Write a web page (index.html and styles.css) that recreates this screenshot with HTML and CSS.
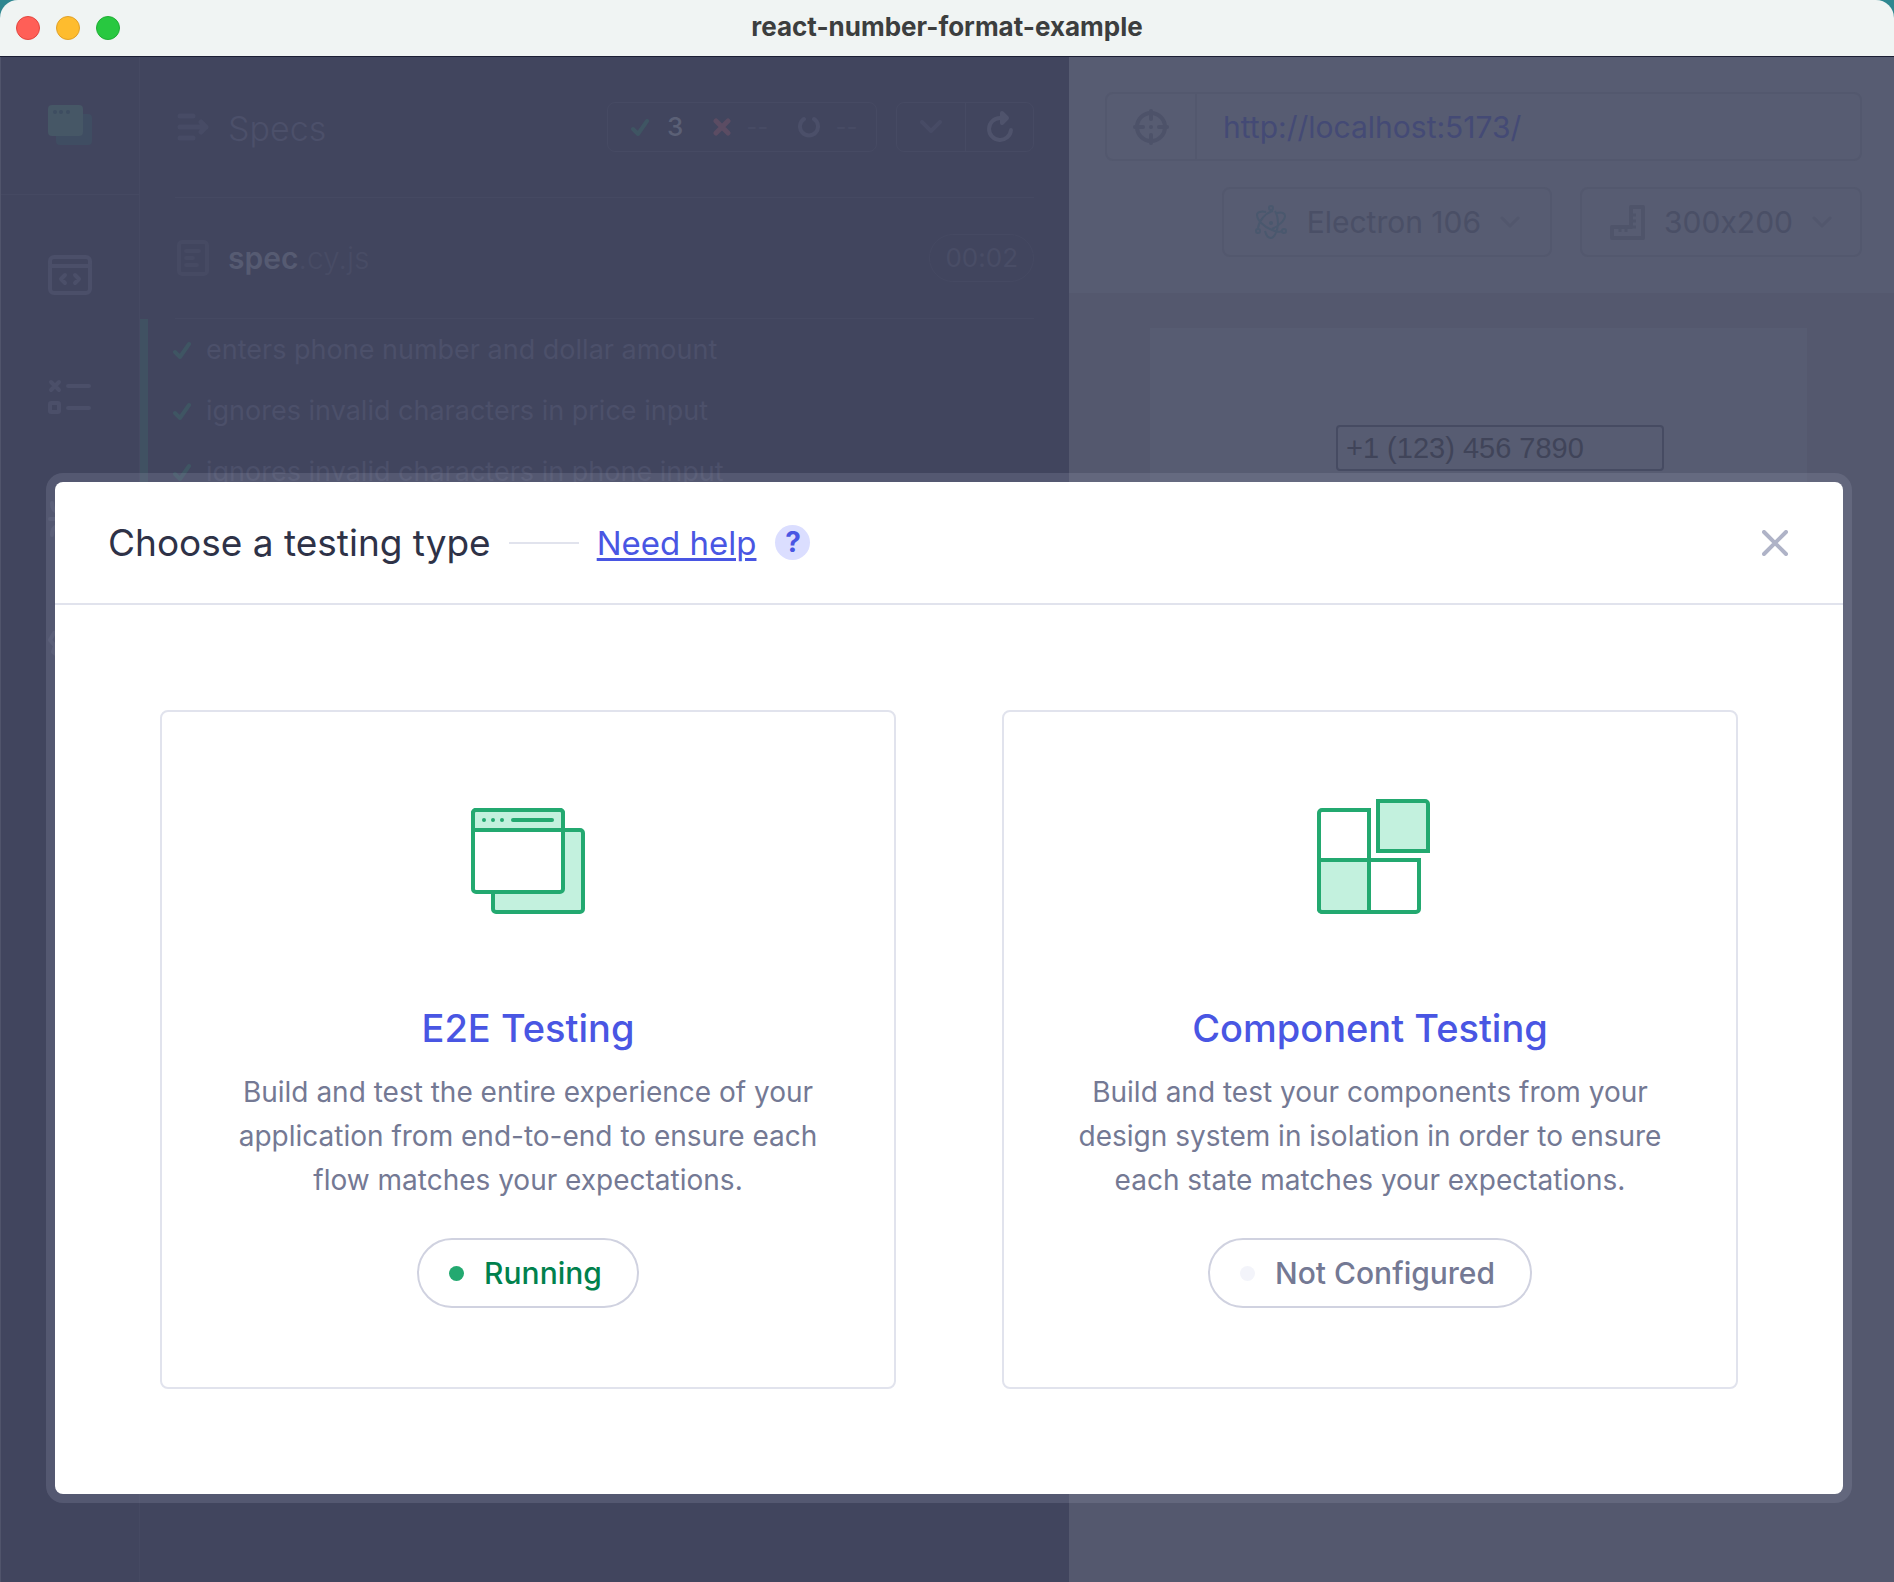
FILE: index.html
```html
<!DOCTYPE html>
<html lang="en">
<head>
<meta charset="utf-8">
<meta name="viewport" content="width=device-width, initial-scale=1">
<title>react-number-format-example</title>
<link rel="stylesheet" href="styles.css">
</head>
<body>
<div class="window">
  <header class="titlebar">
    <div class="lights">
      <button class="light light-close" type="button" aria-label="Close window"></button>
      <button class="light light-min" type="button" aria-label="Minimize window"></button>
      <button class="light light-max" type="button" aria-label="Zoom window"></button>
    </div>
    <h1 class="window-title">react-number-format-example</h1>
  </header>

  <div class="app">
    <nav class="sidebar" aria-label="Main">
      <div class="sidebar-logo">
        <svg width="44" height="40" viewBox="0 0 44 40">
          <rect x="8" y="9" width="36" height="31" rx="4" fill="#3f4d62"/>
          <rect width="35" height="31" rx="4" fill="#465766"/>
          <g fill="#3e4d61"><circle cx="7" cy="7" r="2"/><circle cx="13" cy="7" r="2"/><circle cx="20" cy="7" r="2"/></g>
        </svg>
      </div>
      <a class="nav-link" href="#specs" aria-label="Specs">
        <svg width="44" height="40" viewBox="0 0 44 40" fill="none" stroke="#4b4f69" stroke-width="4" stroke-linejoin="round" stroke-linecap="round"><rect x="2" y="2" width="40" height="36" rx="4"/><path d="M2 11h40M17 20l-4 4 4 4M27 20l4 4-4 4"/></svg>
      </a>
      <a class="nav-link" href="#runs" aria-label="Runs">
        <svg width="44" height="40" viewBox="0 0 44 40" fill="none" stroke="#4b4f69" stroke-width="4" stroke-linecap="round"><path d="M3 5l8 8M11 5l-8 8M20 9h21M20 31h21"/><rect x="2" y="26" width="9" height="9" rx="1"/></svg>
      </a>
      <a class="nav-link" href="#debug" aria-label="Debug">
        <svg width="44" height="40" viewBox="0 0 44 40" fill="none" stroke="#4b4f69" stroke-width="4" stroke-linecap="round"><path d="M4 4c0 7 4 9 8 9M2 20h8M4 36c0-7 4-9 8-9"/><rect x="12" y="10" width="20" height="26" rx="10"/></svg>
      </a>
      <a class="nav-link" href="#settings" aria-label="Settings">
        <svg width="44" height="40" viewBox="0 0 44 40" fill="none" stroke="#4b4f69" stroke-width="4" stroke-linejoin="round"><path d="M15 4h14l2 6 7 2 3 7-4 5 2 7-9 6H14l-9-6 2-6-5-6 4-7 7-2z"/><circle cx="22" cy="21" r="7"/></svg>
      </a>
    </nav>

    <section class="reporter" aria-label="Test results">
      <div class="reporter-head">
        <svg class="lead-icon" width="32" height="28" viewBox="0 0 32 28" fill="none" stroke="#474b65" stroke-width="5" stroke-linecap="round" stroke-linejoin="round"><path d="M3 3h13M3 14h26M3 25h13M24 9l5 5-5 5"/></svg>
        <h2 class="reporter-title">Specs</h2>
        <ul class="stats">
          <li class="stat stat-pass"><svg width="18" height="18" viewBox="0 0 18 18" fill="none" stroke="#3f5563" stroke-width="4" stroke-linecap="round" stroke-linejoin="round"><path d="M2 11l5 5 9-13"/></svg><span>3</span></li>
          <li class="stat"><svg width="18" height="18" viewBox="0 0 18 18" stroke="#5b4c63" stroke-width="5" stroke-linecap="round"><path d="M3 3l12 12M15 3L3 15"/></svg><span>--</span></li>
          <li class="stat"><svg width="22" height="22" viewBox="0 0 22 22" fill="none" stroke="#4b4f69" stroke-width="4" stroke-linecap="round"><path d="M6 3a9 9 0 1 0 10 0"/></svg><span>--</span></li>
        </ul>
        <div class="run-controls">
          <button class="run-button" type="button" aria-label="Next"><svg width="22" height="14" viewBox="0 0 22 14" fill="none" stroke="#474b65" stroke-width="4" stroke-linecap="round" stroke-linejoin="round"><path d="M2 2l9 9 9-9"/></svg></button>
          <button class="run-button" type="button" aria-label="Rerun"><svg width="28" height="32" viewBox="0 0 28 32" fill="none" stroke="#4f536c" stroke-width="4" stroke-linecap="round" stroke-linejoin="round"><path d="M25 19a11 11 0 1 1-11-12h5"/><path d="M16 2l5 5-5 5z" fill="#4f536c"/></svg></button>
        </div>
      </div>
      <div class="spec-row">
        <svg class="lead-icon" width="32" height="36" viewBox="0 0 32 36" fill="none" stroke="#464a63" stroke-width="4" stroke-linecap="round"><rect x="2" y="2" width="28" height="32" rx="3"/><path d="M9 11h13M9 18h7M9 25h11"/></svg>
        <p class="spec-name"><b>spec</b>.cy.js</p>
        <span class="duration">00:02</span>
      </div>
      <ul class="tests">
        <li class="test"><svg width="18" height="18" viewBox="0 0 18 18"><path d="M2 11l5 5 9-13"/></svg>enters phone number and dollar amount</li>
        <li class="test"><svg width="18" height="18" viewBox="0 0 18 18"><path d="M2 11l5 5 9-13"/></svg>ignores invalid characters in price input</li>
        <li class="test"><svg width="18" height="18" viewBox="0 0 18 18"><path d="M2 11l5 5 9-13"/></svg>ignores invalid characters in phone input</li>
      </ul>
    </section>

    <section class="preview" aria-label="Application preview">
      <div class="toolbar">
        <div class="urlbar">
          <button class="picker" type="button" aria-label="Open selector playground"><svg width="36" height="36" viewBox="0 0 36 36" fill="none" stroke="#4d5269" stroke-width="4" stroke-linecap="round"><circle cx="18" cy="18" r="14"/><path d="M18 2v8M18 26v8M2 18h8M26 18h8M18 18h0"/></svg></button>
          <input class="url" type="text" aria-label="URL" value="http://localhost:5173/">
        </div>
        <div class="options">
          <button class="option" type="button">
            <svg width="34" height="34" viewBox="0 0 34 34" fill="none" stroke="#4a586e" stroke-width="2"><path d="M12 7C7 6 3 7 3 10c0 5 7 12 15 15 5 2 9 2 10 1M23 8c5-1 8 0 8 3 0 4-6 10-13 13M11 26c1 4 3 7 6 7s6-6 7-13c0-6-1-11-3-14M19 6C11 8 5 16 4 23"/><circle cx="17" cy="3" r="2"/><circle cx="4" cy="26" r="2"/><circle cx="30" cy="26" r="2"/><circle cx="17" cy="18" r="1"/></svg>
            Electron 106
            <svg width="20" height="12" viewBox="0 0 20 12" fill="none" stroke="#52576d" stroke-width="3" stroke-linecap="round" stroke-linejoin="round"><path d="M2 2l8 8 8-8"/></svg>
          </button>
          <button class="option option-size" type="button">
            <svg width="35" height="35" viewBox="0 0 35 35" fill="none" stroke="#4f546a" stroke-width="4" stroke-linejoin="round"><path d="M2 22h19V2h12v31H2z"/><path d="M10 22v5M16 22v5M21 22h5M21 16h5M21 10h5" stroke-width="3"/></svg>
            300x200
            <svg width="20" height="12" viewBox="0 0 20 12" fill="none" stroke="#52576d" stroke-width="3" stroke-linecap="round" stroke-linejoin="round"><path d="M2 2l8 8 8-8"/></svg>
          </button>
        </div>
      </div>
      <div class="stage">
        <div class="viewport">
          <input class="phone" type="text" aria-label="Phone number" value="+1 (123) 456 7890">
        </div>
      </div>
    </section>

    <div class="overlay">
      <div class="modal" role="dialog" aria-modal="true" aria-labelledby="modal-title">
        <div class="modal-head">
          <h2 class="modal-title" id="modal-title">Choose a testing type</h2>
          <span class="dash"></span>
          <a class="help" href="#help">Need help</a>
          <span class="help-badge" aria-hidden="true">?</span>
          <button class="close" type="button" aria-label="Close"><svg width="26" height="26" viewBox="0 0 26 26" stroke="#afb3c7" stroke-width="4" stroke-linecap="round"><path d="M2 2l22 22M24 2L2 24"/></svg></button>
        </div>
        <div class="cards">
          <article class="card">
            <svg width="116" height="116" viewBox="0 0 116 116" fill="#c3f1de" stroke="#23a970" stroke-width="4" stroke-linejoin="round">
              <rect x="23" y="32" width="90" height="82" rx="3"/>
              <rect x="3" y="12" width="90" height="82" rx="3" fill="#fff"/>
              <path d="M3 32V15a3 3 0 0 1 3-3h84a3 3 0 0 1 3 3v17z"/>
              <g fill="#23a970" stroke="none"><circle cx="14" cy="22" r="2"/><circle cx="23" cy="22" r="2"/><circle cx="32" cy="22" r="2"/></g>
              <path d="M43 22h39" stroke-linecap="round"/>
            </svg>
            <h3 class="card-title">E2E Testing</h3>
            <p class="card-text">Build and test the entire experience of your application from end-to-end to ensure each flow matches your expectations.</p>
            <button class="status status-running" type="button"><span class="dot"></span>Running</button>
          </article>
          <article class="card">
            <svg width="124" height="116" viewBox="-8 0 124 116" fill="#fff" stroke="#23a970" stroke-width="4">
              <path d="M53 12v50h50v49a3 3 0 0 1-3 3H6a3 3 0 0 1-3-3V15a3 3 0 0 1 3-3h49"/>
              <path d="M3 62h50v52H6a3 3 0 0 1-3-3z" fill="#c3f1de"/>
              <path d="M62 3h47a3 3 0 0 1 3 3v47H62z" fill="#c3f1de"/>
            </svg>
            <h3 class="card-title">Component Testing</h3>
            <p class="card-text">Build and test your components from your design system in isolation in order to ensure each state matches your expectations.</p>
            <button class="status" type="button"><span class="dot"></span>Not Configured</button>
          </article>
        </div>
      </div>
    </div>
  </div>
</div>
</body>
</html>
```
FILE: styles.css
```css
*, *::before, *::after { box-sizing: border-box; }

body {
  margin: 0;
  background: #2f8790;
  font-family: Inter, "Liberation Sans", sans-serif;
  font-variant-ligatures: no-contextual;
}

h1, h2, h3, p, ul { margin: 0; padding: 0; font-weight: 400; }
ul { list-style: none; }
button, input { font: inherit; color: inherit; background: none; border: 0; padding: 0; margin: 0; }
svg { display: block; flex: none; }

.window {
  display: flex;
  flex-direction: column;
  min-height: 100vh;
  border-radius: 18px 18px 0 0;
  overflow: hidden;
}

.titlebar {
  display: grid;
  grid-template-columns: 1fr auto 1fr;
  align-items: center;
  height: 57px;
  padding: 0 16px;
  background: #f0f4f3;
  border-bottom: 1px solid #1b1e34;
}
.lights { display: flex; gap: 16px; }
.light { width: 24px; height: 24px; border-radius: 50%; }
.light-close { background: #ff5f57; border: 1px solid #e2463f; }
.light-min { background: #febc2e; border: 1px solid #e0a028; }
.light-max { background: #28c840; border: 1px solid #1fae34; }
.window-title { padding-bottom: 2px; font-size: 26px; font-weight: 700; line-height: 32px; color: #3c3e3e; }

.app {
  position: relative;
  flex: 1;
  display: grid;
  grid-template-columns: 140px 929px minmax(0, 1fr);
  background: #41455e;
}

.sidebar { border-right: 1px solid #454962; border-left: 1px solid #50546b; }
.sidebar-logo {
  height: 138px;
  padding: 48px 0 0 47px;
  border-bottom: 1px solid #454962;
  margin-bottom: 19px;
}
.nav-link { display: flex; align-items: center; height: 122px; padding-left: 47px; }

.reporter-head, .spec-row { display: flex; align-items: center; margin: 0 35px; border-bottom: 1px solid #454962; }
.reporter-head { height: 141px; padding-bottom: 1px; }
.spec-row { height: 121px; }
.lead-icon { margin: 0 19px 0 2px; }
.reporter-title { flex: 1; padding-top: 3px; font-size: 34px; font-weight: 300; color: #4c506a; }
.stats {
  display: flex;
  align-items: center;
  gap: 30px;
  width: 270px;
  height: 50px;
  padding-left: 23px;
  margin: 0 19px 0 0;
  border: 1px solid #464a63;
  border-radius: 8px;
  font-size: 24px;
  color: #474b64;
}
.stat { display: flex; align-items: center; gap: 15px; }
.stat-pass { gap: 18px; font-size: 26px; font-weight: 500; color: #5b6076; }
.run-controls { display: flex; border: 1px solid #464a63; border-radius: 8px; }
.run-button { display: flex; align-items: center; justify-content: center; width: 68px; height: 48px; }
.run-button + .run-button { border-left: 1px solid #464a63; }
.spec-name { flex: 1; font-size: 30px; font-weight: 300; color: #484c65; }
.spec-name b { font-weight: 600; color: #565b72; }
.duration {
  padding: 0 15px;
  border: 1px solid #454962;
  border-radius: 24px;
  font-size: 26px;
  line-height: 46px;
  color: #494d66;
}

.tests { border-left: 8px solid #405162; }
.test {
  display: flex;
  align-items: center;
  gap: 15px;
  height: 61px;
  padding-left: 25px;
  font-size: 27px;
  color: #4c506a;
}
.test svg { fill: none; stroke: #3f5563; stroke-width: 4; stroke-linecap: round; stroke-linejoin: round; }

.preview { display: flex; flex-direction: column; background: #54586e; }
.toolbar { padding: 35px 32px 36px 36px; background: #575c72; font-size: 30px; }
.urlbar, .option { border: 2px solid #53586e; border-radius: 8px; }
.urlbar { display: flex; height: 69px; }
.picker { display: flex; align-items: center; justify-content: center; width: 90px; border-right: 2px solid #53586e; }
.url { flex: 1; min-width: 0; padding-left: 26px; color: #444a75; }
.options { display: flex; justify-content: flex-end; gap: 28px; margin-top: 26px; }
.option { display: flex; align-items: center; gap: 19px; height: 70px; padding: 0 30px; color: #4a4f66; }
.option-size { padding: 0 28px; }
.stage { flex: 1; display: flex; align-items: flex-start; padding: 35px 87px 0 81px; }
.viewport { flex: 1; aspect-ratio: 3 / 2; padding-top: 97px; background: #575c72; }
.phone {
  display: block;
  width: 328px;
  height: 46px;
  margin-left: 186px;
  padding: 0 8px;
  border: 2px solid #464b62;
  border-radius: 4px;
  font-family: "Liberation Sans", Arial, sans-serif;
  font-size: 29px;
  color: #404459;
}

.overlay {
  position: absolute;
  inset: 0;
  display: flex;
  align-items: flex-end;
  padding: 0 51px 88px 55px;
}
.modal {
  flex: 1;
  background: #fff;
  border-radius: 8px;
  box-shadow: 0 0 0 9px rgba(144, 149, 173, 0.25);
}
.modal-head {
  display: flex;
  align-items: center;
  height: 123px;
  padding: 0 55px 0 53px;
  border-bottom: 2px solid #e1e3ed;
}
.modal-title { font-size: 37px; line-height: 44px; color: #2e3247; }
.dash { width: 70px; height: 2px; margin: 0 18px; background: #e1e3ed; }
.help {
  font-size: 33px;
  line-height: 44px;
  color: #4956e3;
  text-decoration-thickness: 3px;
  text-underline-offset: 3px;
}
.help-badge {
  width: 35px;
  height: 35px;
  margin-left: 19px;
  border-radius: 50%;
  background: #dbdeff;
  font-size: 28px;
  font-weight: 700;
  line-height: 35px;
  text-align: center;
  color: #4956e3;
}
.close { margin-left: auto; }

.cards { display: grid; grid-template-columns: 1fr 1fr; gap: 106px; padding: 105px; }
.card {
  display: flex;
  flex-direction: column;
  align-items: center;
  padding: 86px 54px 79px;
  border: 2px solid #e1e3ed;
  border-radius: 8px;
  text-align: center;
}
.card-title { margin-top: 90px; font-size: 38px; font-weight: 500; line-height: 48px; color: #4956e3; }
.card-text { max-width: 620px; margin-top: 18px; font-size: 28px; line-height: 44px; color: #747994; }
.status {
  display: flex;
  align-items: center;
  gap: 20px;
  height: 70px;
  margin-top: 36px;
  padding: 0 35px 0 30px;
  border: 2px solid #d0d2e0;
  border-radius: 35px;
  font-size: 30px;
  font-weight: 500;
  color: #747994;
}
.status-running { color: #00814d; }
.dot { width: 15px; height: 15px; border-radius: 50%; background: #f3f4fa; }
.status-running .dot { background: #23a970; }
```
